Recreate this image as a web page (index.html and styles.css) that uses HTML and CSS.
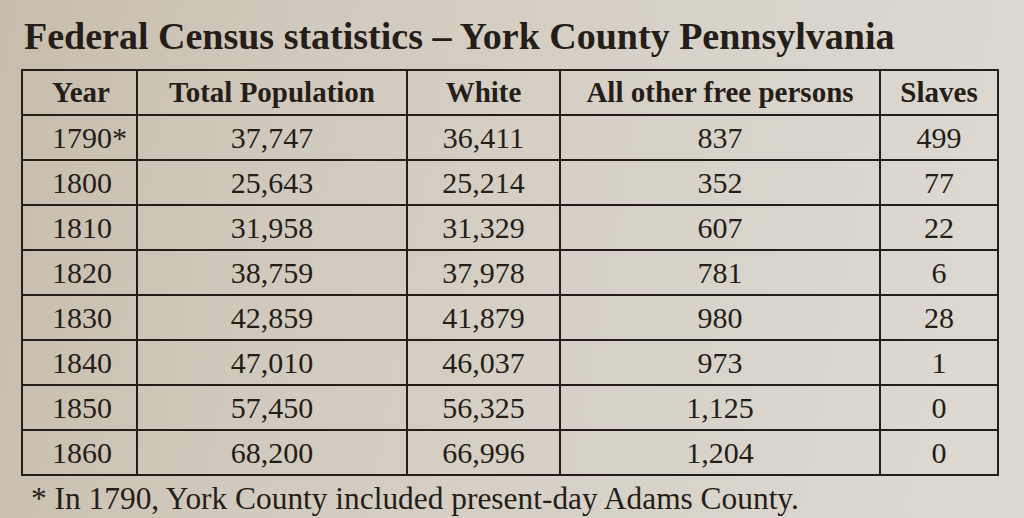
FILE: index.html
```html
<!DOCTYPE html>
<html lang="en">
<head>
<meta charset="utf-8">
<title>Federal Census statistics – York County Pennsylvania</title>
<link rel="stylesheet" href="styles.css">
</head>
<body>
<main class="page">
  <h1 class="title">Federal Census statistics – York County Pennsylvania</h1>
  <table class="census">
    <colgroup>
      <col class="c-year">
      <col class="c-total">
      <col class="c-white">
      <col class="c-free">
      <col class="c-slaves">
    </colgroup>
    <thead>
      <tr>
        <th class="year">Year</th>
        <th>Total Population</th>
        <th>White</th>
        <th>All other free persons</th>
        <th>Slaves</th>
      </tr>
    </thead>
    <tbody>
      <tr><td class="year">1790*</td><td>37,747</td><td>36,411</td><td>837</td><td>499</td></tr>
      <tr><td class="year">1800</td><td>25,643</td><td>25,214</td><td>352</td><td>77</td></tr>
      <tr><td class="year">1810</td><td>31,958</td><td>31,329</td><td>607</td><td>22</td></tr>
      <tr><td class="year">1820</td><td>38,759</td><td>37,978</td><td>781</td><td>6</td></tr>
      <tr><td class="year">1830</td><td>42,859</td><td>41,879</td><td>980</td><td>28</td></tr>
      <tr><td class="year">1840</td><td>47,010</td><td>46,037</td><td>973</td><td>1</td></tr>
      <tr><td class="year">1850</td><td>57,450</td><td>56,325</td><td>1,125</td><td>0</td></tr>
      <tr><td class="year">1860</td><td>68,200</td><td>66,996</td><td>1,204</td><td>0</td></tr>
    </tbody>
  </table>
  <p class="note">* In 1790, York County included present-day Adams County.</p>
</main>
</body>
</html>
```

FILE: styles.css
```css
html, body {
  margin: 0;
  padding: 0;
}

body {
  width: 1024px;
  height: 518px;
  overflow: hidden;
  background: linear-gradient(100deg, #c7bdad 0%, #d1cabe 30%, #d8d3c9 65%, #dedad2 100%);
  color: #241d18;
  font-family: "Liberation Serif", "Times New Roman", serif;
}

.page {
  display: flex;
  flex-direction: column;
  align-items: flex-start;
}

.title {
  margin: 0;
  padding: 17px 0 0 24px;
  font-size: 38px;
  line-height: 38px;
  font-weight: 700;
  white-space: nowrap;
}

.census {
  margin: 14px 0 0 21px;
  border-collapse: collapse;
  table-layout: fixed;
  width: 976px;
  border: 2px solid #241d18;
}

.c-year { width: 115px; }
.c-total { width: 270px; }
.c-white { width: 153px; }
.c-free { width: 320px; }
.c-slaves { width: 118px; }

.census th,
.census td {
  border: 2px solid #241d18;
  height: 43px;
  padding: 0;
  text-align: center;
  vertical-align: middle;
  white-space: nowrap;
}

.census th {
  font-size: 29px;
  font-weight: 700;
  line-height: 1;
}

.census td {
  font-size: 30px;
  font-weight: 400;
  line-height: 1;
}

.census .year {
  text-align: left;
  padding-left: 29px;
}

.note {
  margin: 7px 0 0 31px;
  font-size: 31.4px;
  line-height: 31px;
  white-space: nowrap;
}
```
